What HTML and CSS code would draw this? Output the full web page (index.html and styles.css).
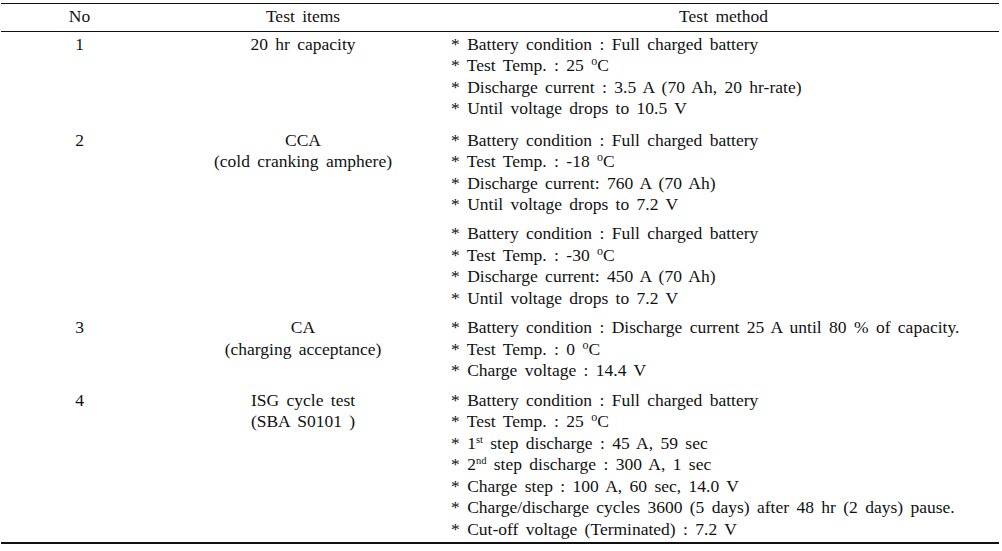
FILE: index.html
```html
<!DOCTYPE html>
<html lang="en">
<head>
<meta charset="utf-8">
<title>Test items</title>
<link rel="stylesheet" href="styles.css">
</head>
<body>
<table class="spec">
  <colgroup>
    <col class="col-no">
    <col class="col-item">
    <col class="col-method">
  </colgroup>
  <thead>
    <tr>
      <th>No</th>
      <th>Test items</th>
      <th>Test method</th>
    </tr>
  </thead>
  <tbody>
    <tr>
      <td class="no">1</td>
      <td class="item">20 hr capacity</td>
      <td class="method">
        <div class="block first">
          <div class="line">* Battery condition : Full charged battery</div>
          <div class="line">* Test Temp. : 25 <sup>o</sup>C</div>
          <div class="line">* Discharge current : 3.5 A (70 Ah, 20 hr-rate)</div>
          <div class="line">* Until voltage drops to 10.5 V</div>
        </div>
      </td>
    </tr>
    <tr>
      <td class="no">2</td>
      <td class="item">CCA<br>(cold cranking amphere)</td>
      <td class="method">
        <div class="block">
          <div class="line">* Battery condition : Full charged battery</div>
          <div class="line">* Test Temp. : -18 <sup>o</sup>C</div>
          <div class="line">* Discharge current: 760 A (70 Ah)</div>
          <div class="line">* Until voltage drops to 7.2 V</div>
        </div>
        <div class="block">
          <div class="line">* Battery condition : Full charged battery</div>
          <div class="line">* Test Temp. : -30 <sup>o</sup>C</div>
          <div class="line">* Discharge current: 450 A (70 Ah)</div>
          <div class="line">* Until voltage drops to 7.2 V</div>
        </div>
      </td>
    </tr>
    <tr>
      <td class="no">3</td>
      <td class="item">CA<br>(charging acceptance)</td>
      <td class="method">
        <div class="block">
          <div class="line">* Battery condition : Discharge current 25 A until 80 % of capacity.</div>
          <div class="line">* Test Temp. : 0 <sup>o</sup>C</div>
          <div class="line">* Charge voltage : 14.4 V</div>
        </div>
      </td>
    </tr>
    <tr class="last">
      <td class="no">4</td>
      <td class="item">ISG cycle test<br>(SBA S0101 )</td>
      <td class="method">
        <div class="block">
          <div class="line">* Battery condition : Full charged battery</div>
          <div class="line">* Test Temp. : 25 <sup>o</sup>C</div>
          <div class="line">* 1<sup class="ord">st</sup> step discharge : 45 A, 59 sec</div>
          <div class="line">* 2<sup class="ord">nd</sup> step discharge : 300 A, 1 sec</div>
          <div class="line">* Charge step : 100 A, 60 sec, 14.0 V</div>
          <div class="line">* Charge/discharge cycles 3600 (5 days) after 48 hr (2 days) pause.</div>
          <div class="line">* Cut-off voltage (Terminated) : 7.2 V</div>
        </div>
      </td>
    </tr>
  </tbody>
</table>
</body>
</html>
```

FILE: styles.css
```css
html, body {
  margin: 0;
  padding: 0;
  background: #ffffff;
}

body {
  font-family: "Liberation Serif", "Times New Roman", serif;
  font-size: 17.5px;
  color: #111111;
}

.spec {
  border-collapse: collapse;
  width: 998px;
  margin: 3px 0 0 1px;
  table-layout: fixed;
  line-height: 21.5px;
  word-spacing: 3px;
}

.col-no { width: 157px; }
.col-item { width: 290px; }
.col-method { width: 551px; }

.spec thead tr {
  border-top: 1px solid #111111;
  border-bottom: 1px solid #111111;
}

.spec th {
  font-weight: normal;
  text-align: center;
  padding: 2px 0 3px;
}

.spec td {
  vertical-align: top;
  padding: 2px 0 0;
}

.spec td.no,
.spec td.item {
  text-align: center;
}

.spec td.method {
  text-align: left;
  padding-left: 3px;
}

.block {
  padding-bottom: 6px;
}

.block.first {
  padding-bottom: 8px;
}

.block + .block {
  padding-top: 1.5px;
}

.last .block {
  padding-bottom: 2px;
}

.spec tbody tr.last {
  border-bottom: 2px solid #111111;
}

sup {
  font-size: 12px;
  line-height: 0;
  vertical-align: 6px;
  word-spacing: 0;
}

sup.ord {
  font-size: 10.5px;
}
```
